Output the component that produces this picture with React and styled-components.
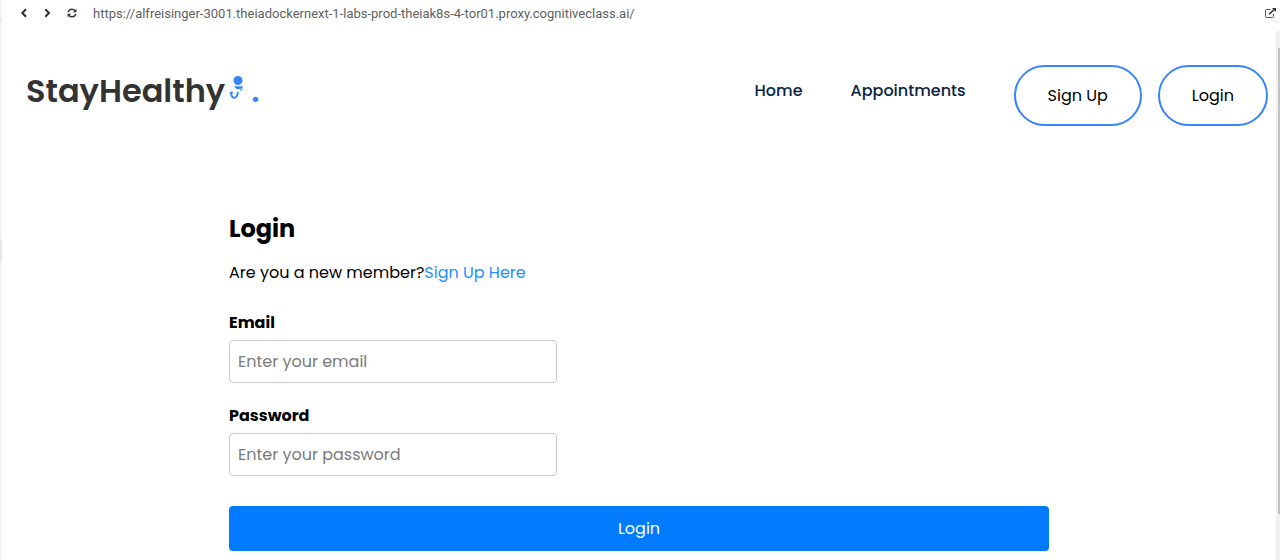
import React from "react";
import styled, { createGlobalStyle } from "styled-components";

const GlobalStyle = createGlobalStyle`
  * { box-sizing: border-box; }
  body {
    margin: 0;
    background: #fff;
    color: #000;
    font-family: Poppins, Inter, "Liberation Sans", sans-serif;
    font-size: 16px;
    line-height: 24px;
  }
`;

const Shell = styled.div`
  display: flex;
  min-height: 100vh;
`;

const EditorEdge = styled.div`
  display: flex;
  flex-direction: column;
  width: 2px;
  flex: none;
  background: #f3f3f3;
`;

const EdgeTop = styled.div`
  height: 20px;
  border-bottom: 1px solid #dcdcdc;
`;

const EdgeSelection = styled.div`
  height: 22px;
  margin-top: 219px;
  background: #e4e6f1;
`;

const Browser = styled.div`
  flex: 1;
  min-width: 0;
  display: flex;
  flex-direction: column;
`;

const Toolbar = styled.div`
  display: flex;
  align-items: center;
  height: 31px;
  padding: 0 4px 5px 16px;
`;

const ToolButton = styled.button`
  display: flex;
  justify-content: center;
  width: ${(p) => p.$width || 24}px;
  padding: 0;
  border: 0;
  background: none;
  color: #2f2f2f;
`;

const Address = styled.input`
  flex: 1;
  min-width: 0;
  height: 20px;
  padding: 0 14px;
  border: 0;
  outline: 0;
  background: none;
  color: #616161;
  font: 13px "Segoe UI", Roboto, "Open Sans", sans-serif;
`;

const Viewport = styled.div`
  display: flex;
  flex: 1;
`;

const Page = styled.div`
  flex: 1;
  min-width: 0;
`;

const Scrollbar = styled.div`
  width: 4px;
  flex: none;
  padding: 17px 0 0 2px;
  background: #f1f1f1;
`;

const Thumb = styled.div`
  height: 466px;
  background: #c1c1c1;
`;

const Header = styled.header`
  display: flex;
  align-items: flex-start;
  justify-content: space-between;
  padding: 34px 8px 0 24px;
`;

const Logo = styled.a`
  display: flex;
  align-items: center;
  height: 52px;
  color: #333;
  font-size: 32px;
  font-weight: 600;
  text-decoration: none;
`;

const Dot = styled.span`
  color: #3685fb;
  margin-left: 2px;
`;

const Nav = styled.nav`
  display: flex;
  align-items: flex-start;
`;

const NavLink = styled.a`
  margin: 14px 48px 0 0;
  color: #0a2540;
  font-weight: 500;
  text-decoration: none;
`;

const PillButton = styled.button`
  height: 61px;
  padding: 0 32px;
  border: 2px solid #3685fb;
  border-radius: 31px;
  background: #fff;
  color: #000;
  font: inherit;
  & + & { margin-left: 16px; }
`;

const LoginPanel = styled.main`
  width: 820px;
  max-width: 100%;
  margin: 85px auto 9px;
`;

const Title = styled.h1`
  margin: 0;
  font-size: 24px;
  line-height: 36px;
  font-weight: 700;
`;

const Intro = styled.p`
  margin: 14px 0 26px;
`;

const SignUpLink = styled.a`
  color: #2190ff;
  text-decoration: none;
`;

const Field = styled.div`
  margin-bottom: 21px;
`;

const Label = styled.label`
  display: block;
  margin-bottom: 5px;
  font-weight: 700;
`;

const TextInput = styled.input`
  display: block;
  width: 40%;
  height: 43px;
  padding: 0 8px;
  border: 1px solid #ccc;
  border-radius: 4px;
  background: #fff;
  font: inherit;
  &::placeholder { color: #7b7b7b; }
`;

const SubmitButton = styled.button`
  display: block;
  width: 100%;
  height: 45px;
  margin-top: 30px;
  border: 0;
  border-radius: 4px;
  background: #007bff;
  color: #fff;
  font: inherit;
`;

const Chevron = ({ d }) => (
  <svg width="10" height="10" viewBox="0 0 10 10" fill="none" stroke="currentColor" strokeWidth="2">
    <path d={d} />
  </svg>
);

const RefreshIcon = () => (
  <svg width="10" height="10" viewBox="0 0 10 10" fill="none" stroke="currentColor" strokeWidth="1.4">
    <path d="M1.2 4.2C1.6 2.4 3 1.2 5 1.2c1.3 0 2.2.5 3 1.3M8.8 5.8C8.4 7.6 7 8.8 5 8.8 3.7 8.8 2.8 8.3 2 7.5" />
    <path d="M9.4.8v3.4H6zM.6 9.2V5.8H4z" fill="currentColor" stroke="none" />
  </svg>
);

const OpenIcon = () => (
  <svg width="11" height="10" viewBox="0 0 11 10" fill="none" stroke="#555">
    <path d="M5.5 1.5h-4a1 1 0 0 0-1 1v6a1 1 0 0 0 1 1h6a1 1 0 0 0 1-1V6" />
    <path d="M4 6.3 8.8 1.7" stroke="#2f2f2f" strokeWidth="1.5" />
    <path d="M7 0h4v4z" fill="#2f2f2f" stroke="none" />
  </svg>
);

const DoctorMark = () => (
  <svg width="24" height="32" viewBox="0 0 24 32" fill="#3685fb" aria-hidden="true">
    <circle cx="13" cy="5.5" r="4.5" />
    <path d="M9.3 11.2h8.2c-.3 1.800-1.800 3-4 3-2 0-3.600-1.100-4.200-3z" />
    <path d="M17.500 12.300c0 1.500-.8 2.400-2.500 3.200" fill="none" stroke="#3685fb" />
    <path d="M4.800 18.300 7.800 17.300M6.300 17.600C6 21 7.300 22.700 9.300 22.700c2.200 0 3.200-2 3.600-5.700" fill="none" stroke="#3685fb" strokeWidth="2" />
  </svg>
);

export default function App() {
  return (
    <>
      <GlobalStyle />
      <Shell>
        <EditorEdge>
          <EdgeTop />
          <EdgeSelection />
        </EditorEdge>
        <Browser>
          <Toolbar>
            <ToolButton $width={12} aria-label="Back"><Chevron d="M7 1.300 3.300 5 7 8.700" /></ToolButton>
            <ToolButton $width={34} aria-label="Forward"><Chevron d="M3.300 1.300 7 5 3.300 8.700" /></ToolButton>
            <ToolButton $width={15} aria-label="Refresh"><RefreshIcon /></ToolButton>
            <Address
              aria-label="Address"
              defaultValue="https://alfreisinger-3001.theiadockernext-1-labs-prod-theiak8s-4-tor01.proxy.cognitiveclass.ai/"
            />
            <ToolButton $width={11} aria-label="Open in a new window"><OpenIcon /></ToolButton>
          </Toolbar>
          <Viewport>
            <Page>
              <Header>
                <Logo href="#home">
                  StayHealthy
                  <DoctorMark />
                  <Dot>.</Dot>
                </Logo>
                <Nav>
                  <NavLink href="#home">Home</NavLink>
                  <NavLink href="#appointments">Appointments</NavLink>
                  <PillButton type="button">Sign Up</PillButton>
                  <PillButton type="button">Login</PillButton>
                </Nav>
              </Header>
              <LoginPanel>
                <Title>Login</Title>
                <Intro>
                  Are you a new member?<SignUpLink href="#signup">Sign Up Here</SignUpLink>
                </Intro>
                <form>
                  <Field>
                    <Label htmlFor="email">Email</Label>
                    <TextInput id="email" type="email" placeholder="Enter your email" />
                  </Field>
                  <Field>
                    <Label htmlFor="password">Password</Label>
                    <TextInput id="password" type="password" placeholder="Enter your password" />
                  </Field>
                  <SubmitButton type="button">Login</SubmitButton>
                </form>
              </LoginPanel>
            </Page>
            <Scrollbar>
              <Thumb />
            </Scrollbar>
          </Viewport>
        </Browser>
      </Shell>
    </>
  );
}
